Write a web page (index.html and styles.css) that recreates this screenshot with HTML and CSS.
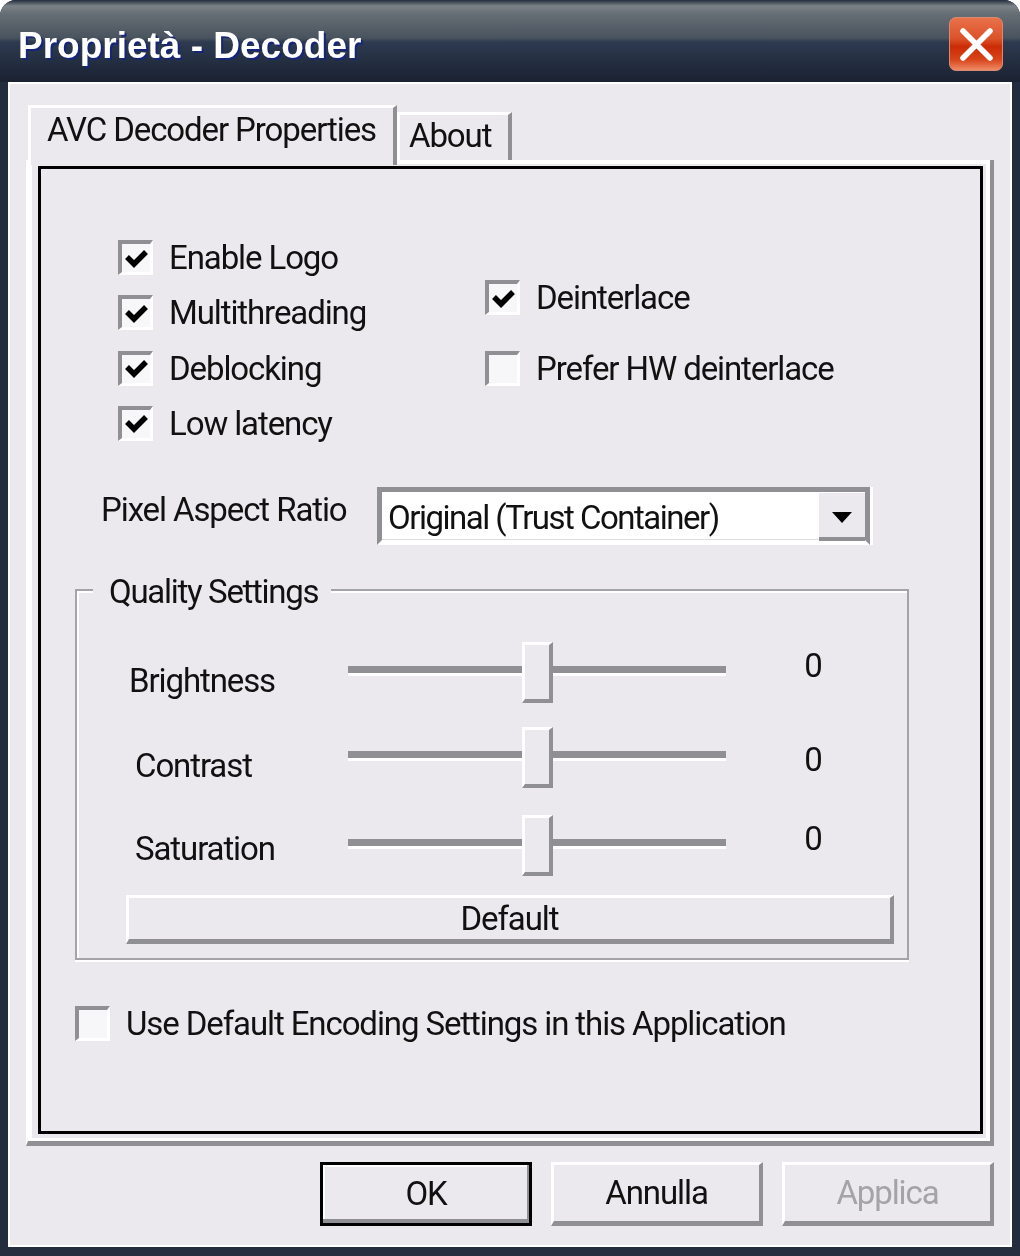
FILE: index.html
```html
<!DOCTYPE html>
<html lang="it">
<head>
    <meta charset="UTF-8">
    <title>Proprietà - Decoder</title>
    <link rel="stylesheet" href="styles.css">
</head>
<body>
    <div class="window">
        <div class="titlebar">
            <span class="title">Proprietà - Decoder</span>
            <button class="close">
                <svg width="52" height="52" viewBox="0 0 52 52"><path d="M13 13 L40 40 M40 13 L13 40" stroke="#fff" stroke-width="5.5" stroke-linecap="round" fill="none"/></svg>
            </button>
        </div>

        <div class="client">
            <div class="tabs">
                <div class="tab active">AVC Decoder Properties</div>
                <div class="tab">About</div>
            </div>

            <div class="panel">
                <div class="page">
                    <div class="options">
                        <div class="col-left">
                            <label class="check"><span class="box checked"><svg width="23" height="19" viewBox="0 0 23 19"><path d="M2 8 L9 15 L21 3" stroke="#000" stroke-width="5.5" fill="none"/></svg></span>Enable Logo</label>
                            <label class="check"><span class="box checked"><svg width="23" height="19" viewBox="0 0 23 19"><path d="M2 8 L9 15 L21 3" stroke="#000" stroke-width="5.5" fill="none"/></svg></span>Multithreading</label>
                            <label class="check"><span class="box checked"><svg width="23" height="19" viewBox="0 0 23 19"><path d="M2 8 L9 15 L21 3" stroke="#000" stroke-width="5.5" fill="none"/></svg></span>Deblocking</label>
                            <label class="check"><span class="box checked"><svg width="23" height="19" viewBox="0 0 23 19"><path d="M2 8 L9 15 L21 3" stroke="#000" stroke-width="5.5" fill="none"/></svg></span>Low latency</label>
                        </div>
                        <div class="col-right">
                            <label class="check"><span class="box checked"><svg width="23" height="19" viewBox="0 0 23 19"><path d="M2 8 L9 15 L21 3" stroke="#000" stroke-width="5.5" fill="none"/></svg></span>Deinterlace</label>
                            <label class="check"><span class="box"></span>Prefer HW deinterlace</label>
                        </div>
                    </div>

                    <div class="aspect">
                        <span class="aspect-label">Pixel Aspect Ratio</span>
                        <div class="combo">
                            <span class="combo-text">Original (Trust Container)</span>
                            <span class="combo-btn"><svg width="20" height="11" viewBox="0 0 20 11"><path d="M0 0 H20 L10 11 Z" fill="#000"/></svg></span>
                        </div>
                    </div>

                    <fieldset class="group">
                        <legend>Quality Settings</legend>
                        <div class="slider-row row-brightness">
                            <span class="slider-label">Brightness</span>
                            <div class="slider"><span class="thumb"></span></div>
                            <span class="slider-value">0</span>
                        </div>
                        <div class="slider-row row-contrast">
                            <span class="slider-label">Contrast</span>
                            <div class="slider"><span class="thumb"></span></div>
                            <span class="slider-value">0</span>
                        </div>
                        <div class="slider-row row-saturation">
                            <span class="slider-label">Saturation</span>
                            <div class="slider"><span class="thumb"></span></div>
                            <span class="slider-value">0</span>
                        </div>
                        <button class="default-btn">Default</button>
                    </fieldset>

                    <label class="check check-encoding"><span class="box"></span>Use Default Encoding Settings in this Application</label>
                </div>
            </div>

            <div class="actions">
                <button class="btn primary">OK</button>
                <button class="btn">Annulla</button>
                <button class="btn disabled">Applica</button>
            </div>
        </div>
    </div>
</body>
</html>
```

FILE: styles.css
```css
* {
    box-sizing: border-box;
}
body {
    margin: 0;
    background-color: #fff;
    font-family: Roboto, "Liberation Sans", Arial, sans-serif;
    font-size: 33px;
    letter-spacing: -1.1px;
    color: #111;
}
button {
    font: inherit;
    letter-spacing: inherit;
    color: inherit;
    padding: 0;
}
.window {
    width: 1020px;
    height: 1256px;
    background-color: #232d3e;
    border-radius: 16px 16px 0 0;
    padding: 0 8px 9px 8px;
    display: flex;
    flex-direction: column;
    filter: blur(0.5px);
}

/* title bar */
.titlebar {
    height: 82px;
    margin: 0 -8px;
    padding: 0 17px 0 18px;
    display: flex;
    justify-content: space-between;
    align-items: center;
    border-radius: 16px 16px 0 0;
    background: linear-gradient(#232d3e 0, #7b8287 6px, #666e75 14px, #49535e 38px, #2d3a50 42px, #1b2333 80px);
}
.title {
    margin-top: 10px;
    font-family: "Liberation Sans", Arial, sans-serif;
    font-weight: bold;
    font-size: 37px;
    letter-spacing: 0;
    color: #fff;
    text-shadow: 2px 2px 0 #15257a;
}
.close {
    width: 54px;
    height: 54px;
    margin-top: 6px;
    border: 1px solid #d98a70;
    border-radius: 7px;
    background: linear-gradient(#e9714a 0, #dc5229 40%, #cc2c05 55%, #d9441a 80%, #ee8a66 100%);
    display: flex;
}

/* dialog body */
.client {
    flex: 1;
    padding: 21px 16px 0 16px;
    background-color: #ebe9ed;
    border: 2px solid #fff;
}
.tabs {
    display: flex;
    align-items: flex-end;
    height: 55px;
    margin-left: 2px;
    position: relative;
}
.tab {
    white-space: nowrap;
    line-height: 38px;
    border-top: 3px solid #fff;
    border-left: 3px solid #fff;
    border-right: 4px solid #8f8f94;
    background-color: #ebe9ed;
}
.tab.active {
    width: 369px;
    height: 60px;
    margin-bottom: -5px;
    padding: 3px 0 0 16px;
}
.tab:not(.active) {
    width: 115px;
    height: 48px;
    padding: 2px 0 0 9px;
}
.panel {
    width: 968px;
    height: 986px;
    padding: 6px 7px 7px 10px;
    border-left: 2px solid #fff;
    border-right: 4px solid #8f8f94;
    border-bottom: 5px solid #8f8f94;
    box-shadow: inset 4px 4px 0 #fff, inset -4px -3px 0 #fff;
}
.page {
    height: 100%;
    padding: 71px 0 0 0;
    border: 3px solid #000;
}

/* checkboxes */
.options {
    display: flex;
    margin-left: 77px;
}
.col-left {
    width: 367px;
    display: flex;
    flex-direction: column;
    gap: 20.3px;
}
.col-right {
    margin-top: 40px;
    display: flex;
    flex-direction: column;
    gap: 36px;
}
.check {
    display: flex;
    align-items: center;
    height: 35px;
    line-height: 37px;
    white-space: nowrap;
}
.box {
    width: 35px;
    height: 35px;
    margin-right: 16px;
    display: flex;
    align-items: center;
    justify-content: center;
    background-color: #f7f7f9;
    border-top: 4px solid #8f8f94;
    border-left: 4px solid #8f8f94;
    border-right: 3px solid #fff;
    border-bottom: 3px solid #fff;
}
.check-encoding {
    margin: 46px 0 0 34px;
}

/* pixel aspect ratio */
.aspect {
    display: flex;
    margin: 46px 0 0 60px;
}
.aspect-label {
    width: 276px;
    line-height: 46px;
}
.combo {
    width: 493px;
    height: 58px;
    display: flex;
    justify-content: space-between;
    background-color: #fff;
    border-top: 5px solid #8f8f94;
    border-left: 5px solid #8f8f94;
    border-right: 5px solid #8f8f94;
    border-bottom: 5px solid #fff;
    box-shadow: inset 0 -1px 0 #ddd, 3px 0 0 #fff;
}
.combo-text {
    padding-left: 6px;
    line-height: 52px;
    letter-spacing: -1.5px;
}
.combo-btn {
    width: 46px;
    height: 48px;
    margin-top: 1px;
    padding-top: 6px;
    display: flex;
    align-items: center;
    justify-content: center;
    background-color: #ebe9ed;
    border-bottom: 4px solid #8f8f94;
}

/* quality settings */
.group {
    width: 834px;
    height: 390px;
    margin: 25px 0 0 34px;
    padding: 0 0 0 52px;
    border: 2px solid #a3a3a8;
    box-shadow: inset 2px 2px 0 #fff, 0 2px 0 #fff;
}
.group legend {
    margin-left: -36px;
    padding: 4px 13px 0 16px;
    line-height: 36px;
    letter-spacing: -1.3px;
    background-color: #ebe9ed;
}
.slider-row {
    display: grid;
    grid-template-columns: 219px 378px 174px;
    height: 61px;
}
.row-brightness {
    margin-top: 32px;
}
.row-contrast {
    margin-top: 24px;
}
.row-saturation {
    margin-top: 27px;
}
.slider-label,
.slider-value {
    line-height: 36px;
}
.slider-value {
    text-align: center;
}
.row-brightness .slider-label,
.row-contrast .slider-label {
    margin-top: 21px;
}
.row-saturation .slider-label {
    margin-top: 16px;
}
.row-contrast .slider-label,
.row-saturation .slider-label {
    padding-left: 6px;
}
.row-brightness .slider-value,
.row-saturation .slider-value {
    margin-top: 6px;
}
.row-contrast .slider-value {
    margin-top: 15px;
}
.slider {
    position: relative;
}
.slider::before {
    content: "";
    position: absolute;
    left: 0;
    right: 0;
    top: 24px;
    height: 7px;
    background-color: #8f8f94;
    border-bottom: 3px solid #fff;
}
.thumb {
    position: absolute;
    left: 174px;
    top: 0;
    width: 31px;
    height: 61px;
    background-color: #ebe9ed;
    border-top: 3px solid #fff;
    border-left: 3px solid #fff;
    border-right: 4px solid #8f8f94;
    border-bottom: 4px solid #8f8f94;
}
.default-btn {
    display: block;
    width: 768px;
    height: 49px;
    margin: 19px 0 0 -3px;
    background-color: #ebe9ed;
    border-top: 3px solid #fff;
    border-left: 3px solid #fff;
    border-right: 4px solid #8f8f94;
    border-bottom: 5px solid #8f8f94;
}

/* dialog buttons */
.actions {
    display: flex;
    justify-content: flex-end;
    gap: 19px;
    margin-top: 16px;
}
.btn {
    width: 212px;
    height: 64px;
    padding-bottom: 2px;
    background-color: #ebe9ed;
    border-top: 3px solid #fff;
    border-left: 3px solid #fff;
    border-right: 4px solid #8f8f94;
    border-bottom: 5px solid #8f8f94;
}
.btn.primary {
    border: 3px solid #000;
    box-shadow: inset -2px -4px 0 #8f8f94, inset 2px 2px 0 #fff;
}
.btn.disabled {
    color: #a3a3a8;
}
```
